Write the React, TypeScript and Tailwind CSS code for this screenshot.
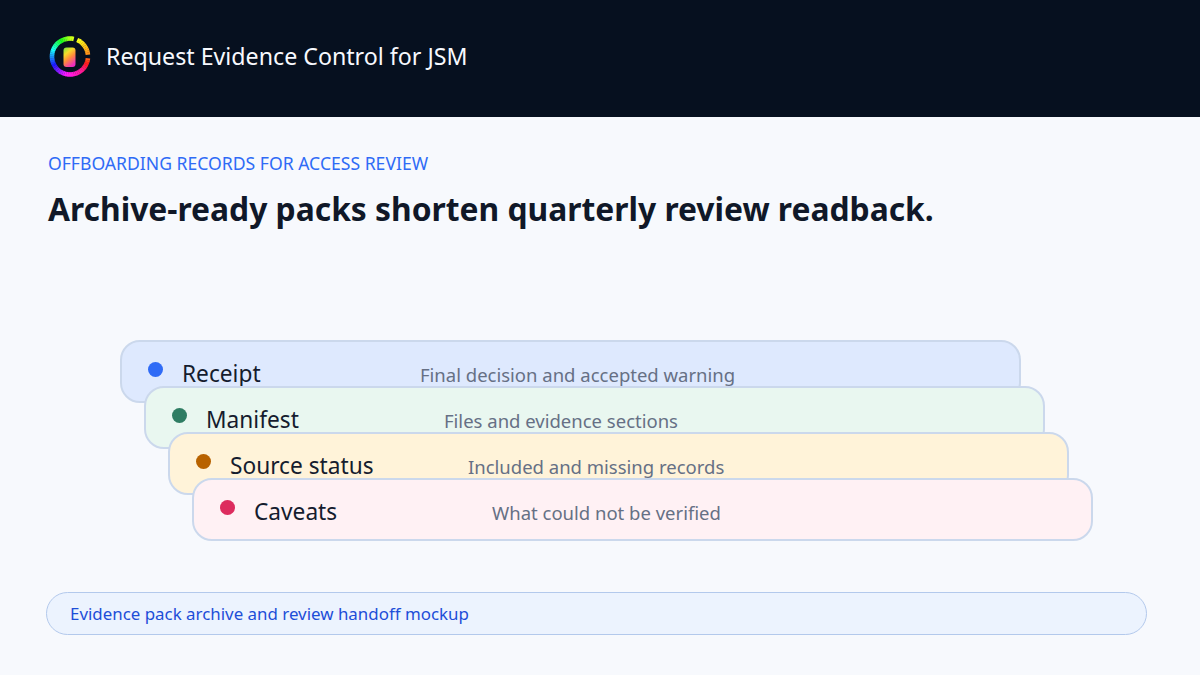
const font = "font-['Noto_Sans','Liberation_Sans',sans-serif]";

const cards = [
  { t: "Receipt", d: "Final decision and accepted warning", bg: "bg-[#dee9fe]", dot: "bg-[#2f6bf6]", ml: "ml-[120px]", mt: "" },
  { t: "Manifest", d: "Files and evidence sections", bg: "bg-[#e9f7f0]", dot: "bg-[#2f7d63]", ml: "ml-[144px]", mt: "-mt-[17px]" },
  { t: "Source status", d: "Included and missing records", bg: "bg-[#fff3d9]", dot: "bg-[#b86200]", ml: "ml-[168px]", mt: "-mt-[17px]" },
  { t: "Caveats", d: "What could not be verified", bg: "bg-[#fff1f4]", dot: "bg-[#dd2c5e]", ml: "ml-[192px]", mt: "-mt-[17px]" },
];

const pt = (deg: number, r: number) => {
  const a = ((deg - 90) * Math.PI) / 180;
  return `${(21 + r * Math.cos(a)).toFixed(2)} ${(20.5 + r * Math.sin(a)).toFixed(2)}`;
};
const segs: number[] = [];
for (let d = 0; d < 360; d += 6) {
  if ((d >= 12 && d < 24) || (d >= 84 && d < 96)) continue;
  segs.push(d);
}
const hue = (d: number) => {
  const stops: [number, number][] = [[0, 75], [90, 25], [135, -30], [190, -60], [240, -120], [285, -175], [360, -285]];
  for (let i = 1; i < stops.length; i++) {
    if (d <= stops[i][0]) {
      const [a, ha] = stops[i - 1];
      const [b, hb] = stops[i];
      return (ha + ((d - a) / (b - a)) * (hb - ha) + 720) % 360;
    }
  }
  return 75;
};

function Logo() {
  return (
    <svg width="42" height="42" viewBox="0 0 42 42">
      <defs>
        <linearGradient id="inner" x1="0.1" y1="0" x2="0.6" y2="1">
          <stop offset="0" stopColor="#7fe83c" />
          <stop offset="0.3" stopColor="#f5dc2a" />
          <stop offset="0.6" stopColor="#ff8a3c" />
          <stop offset="1" stopColor="#f02cc0" />
        </linearGradient>
      </defs>
      {segs.map((d) => (
        <path
          key={d}
          d={`M${pt(d - 0.5, 18)}A18 18 0 0 1 ${pt(d + 6.2, 18)}`}
          fill="none"
          stroke={`hsl(${hue(d)} 100% 55%)`}
          strokeWidth="4.6"
        />
      ))}
      <rect x="14.5" y="11.5" width="12" height="19.5" rx="3" fill="url(#inner)" />
    </svg>
  );
}

export default function App() {
  return (
    <div className={`w-[1200px] h-[675px] overflow-hidden bg-[#f7f9fd] flex flex-col ${font}`}>
      <header className="h-[117px] bg-[#06101f] flex items-center pl-[49px] pb-[4px] gap-[15px]">
        <Logo />
        <span className="mt-[1px] text-[23.2px] text-[#f7f9fe] leading-none">Request Evidence Control for JSM</span>
      </header>
      <div className="pl-[48px] pt-[35px]">
        <div className="text-[17.6px] leading-[22px] text-[#2f6bf6]">OFFBOARDING RECORDS FOR ACCESS REVIEW</div>
        <h1 className="mt-[12px] text-[31.8px] leading-[46px] font-bold text-[#101828]">Archive-ready packs shorten quarterly review readback.</h1>
      </div>
      <div className="mt-[108px] flex flex-col">
        {cards.map((c) => (
          <div key={c.t} className={`${c.ml} ${c.mt} ${c.bg} w-[901px] h-[63px] rounded-[20px] border-2 border-[#cbd8ec] flex items-start`}>
            <span className={`${c.dot} w-[15px] h-[15px] rounded-full mt-[20px] ml-[26px] shrink-0`} />
            <span className="ml-[19px] w-[238px] shrink-0 text-[22.7px] leading-[30px] mt-[17px] text-[#151c2e]">{c.t}</span>
            <span className="text-[18.5px] leading-[26px] mt-[20px] text-[#667085]">{c.d}</span>
          </div>
        ))}
      </div>
      <div className="ml-[46px] mt-[51px] w-[1101px] h-[43px] rounded-full border border-[#b3c9ec] bg-[#ecf3fe] flex items-center pl-[23px] text-[16.9px] text-[#1d4ed8]">
        Evidence pack archive and review handoff mockup
      </div>
    </div>
  );
}
